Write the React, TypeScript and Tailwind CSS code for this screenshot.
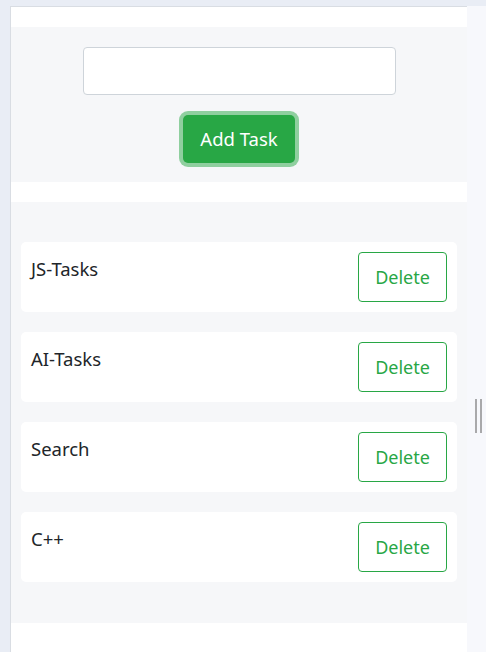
const tasks = ["JS-Tasks", "AI-Tasks", "Search", "C++"];

function TaskRow({ name }: { name: string }) {
  return (
    <div className="mx-[10px] h-[70px] rounded-[5px] bg-white p-[10px] flex justify-between items-start">
      <span className="pt-[3px] text-[18.5px] leading-[27px] text-[#212529]">{name}</span>
      <button className="w-[89px] h-[50px] rounded-[4px] border border-[#28a745] text-[18px] text-[#28a745] bg-white">
        Delete
      </button>
    </div>
  );
}

export default function App() {
  return (
    <div
      className="h-[652px] w-[486px] overflow-hidden bg-[#e9edf5] pt-[6px] pl-[10px] flex"
      style={{ fontFamily: '"Noto Sans", "Liberation Sans", sans-serif' }}
    >
      <div className="w-[457px] h-full border-t border-l border-[#d9dde3] flex flex-col">
        <div className="h-[20px] bg-white" />

        {/* form */}
        <div className="h-[155px] bg-[#f6f7f9] flex flex-col items-center pt-[20px]">
          <input
            className="w-[313px] h-[48px] rounded-[4px] border border-[#ced4da] bg-white outline-none px-3"
            type="text"
          />
          <button className="mt-[20px] w-[112px] h-[48px] rounded-[5px] bg-[#28a745] text-white text-[18.5px] shadow-[0_0_0_4px_rgba(40,167,69,0.5)]">
            Add Task
          </button>
        </div>

        <div className="h-[20px] bg-white" />

        {/* list */}
        <div className="bg-[#f6f7f9] pt-[40px] pb-[41px] flex flex-col gap-[20px]">
          {tasks.map((t) => (
            <TaskRow key={t} name={t} />
          ))}
        </div>

        <div className="flex-1 bg-white" />
      </div>

      {/* scroll track */}
      <div className="w-[19px] h-full bg-[#f7f8fc] pt-[393px] pl-[8px]">
        <div className="w-[7px] h-[34px] border-x-[2px] border-[#a9a9ab]" />
      </div>
    </div>
  );
}
